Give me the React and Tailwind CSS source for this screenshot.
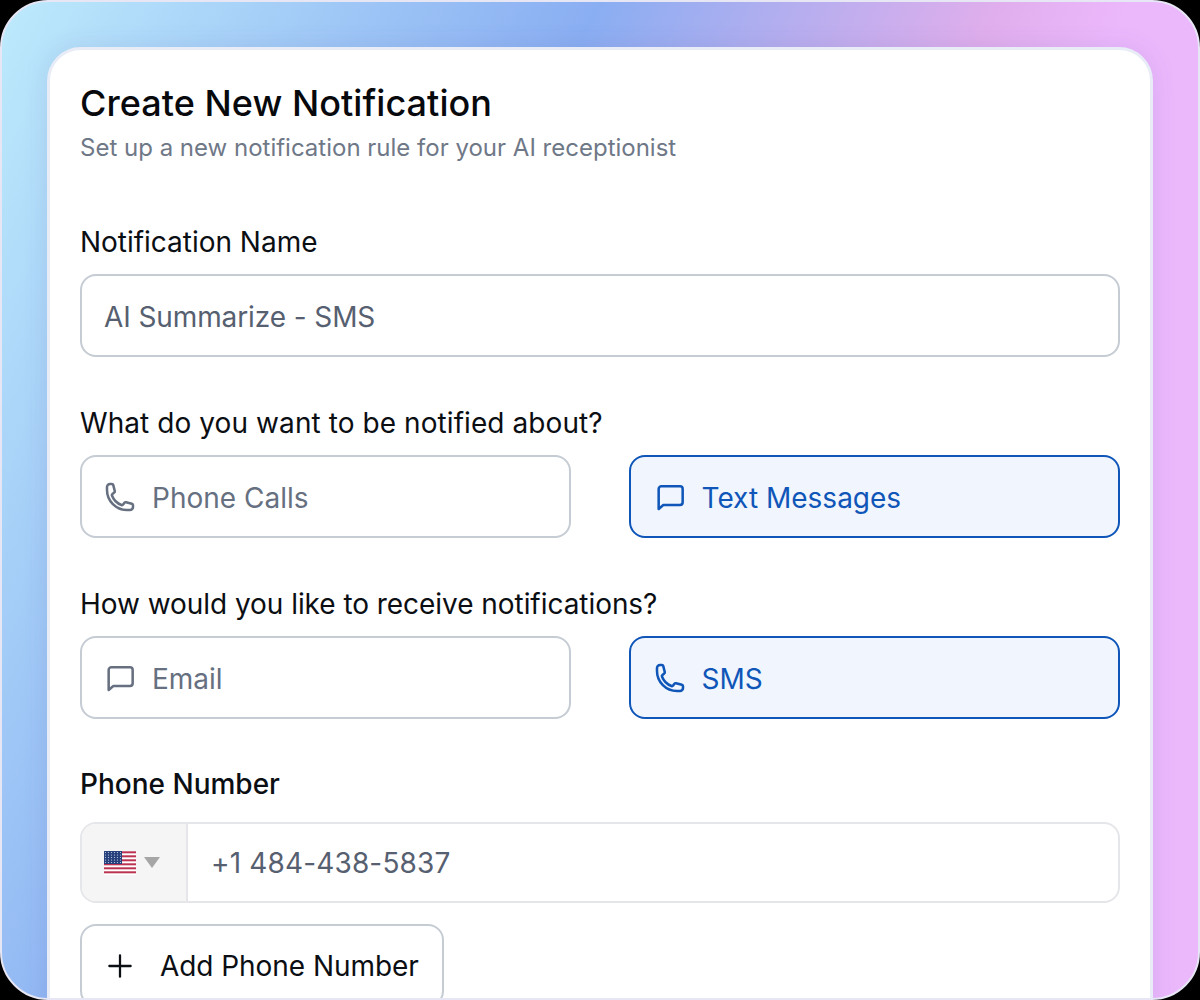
import React from "react";

const PhoneIcon = ({ className }) => (
  <svg className={className} width="32" height="32" viewBox="0 0 24 24" fill="none" stroke="currentColor" strokeWidth="1.9" strokeLinecap="round" strokeLinejoin="round">
    <path d="M2.25 6.75c0 8.284 6.716 15 15 15h2.25a2.25 2.25 0 0 0 2.25-2.25v-1.372c0-.516-.351-.966-.852-1.091l-4.423-1.106c-.44-.11-.902.055-1.173.417l-.97 1.293c-.282.376-.769.542-1.21.38a12.035 12.035 0 0 1-7.143-7.143c-.162-.441.004-.928.38-1.21l1.293-.97c.363-.271.527-.734.417-1.173L6.963 3.102a1.125 1.125 0 0 0-1.091-.852H4.5A2.25 2.25 0 0 0 2.25 4.5v2.25Z" />
  </svg>
);

const ChatIcon = ({ className }) => (
  <svg className={className} width="32" height="32" viewBox="0 0 24 24" fill="none" stroke="currentColor" strokeWidth="1.9" strokeLinecap="round" strokeLinejoin="round">
    <path d="M3.5 21V6a2 2 0 0 1 2-2h14a2 2 0 0 1 2 2v10a2 2 0 0 1-2 2H7L3.5 21Z" />
  </svg>
);

const Flag = () => (
  <svg width="32" height="24" viewBox="0 0 32 24" className="block">
    <rect width="32" height="24" fill="#fff" />
    {[0, 4, 8, 12, 16, 20].map((y) => (
      <rect key={y} x="0" y={y + 0.3} width="32" height="2" fill="#bb3350" />
    ))}
    <rect width="18" height="13" fill="#27417c" />
    {[1.5, 4, 6.5, 9, 11.5].map((y) =>
      [2, 5, 8, 11, 14, 17].map((x) => <circle key={`${x}-${y}`} cx={x - 0.5} cy={y} r="0.6" fill="#c8d2e8" />)
    )}
  </svg>
);

const Option = ({ icon, label, active }) => (
  <div
    className={
      active
        ? "flex h-[83px] flex-1 items-center gap-[16px] rounded-[16px] border-2 border-[#0f56b8] bg-[#f0f5fe] pl-[23px] pr-[22px] text-[#0f56b8]"
        : "flex h-[83px] flex-1 items-center gap-[16px] rounded-[16px] border-2 border-[#c6ccd4] bg-white px-[22px] text-[#667080]"
    }
  >
    {icon}
    <span className="pt-[2px] text-[28px] leading-none">{label}</span>
  </div>
);

export default function App() {
  return (
    <div className="h-[1000px] w-[1200px] overflow-hidden bg-black font-['Inter',sans-serif]">
      <div className="h-[1000px] overflow-hidden rounded-[48px] border-2 border-[#e6e6f4] bg-[linear-gradient(115deg,#bdeafc_0%,#8aaef2_36%,#e0aeec_60%,#ecb8fc_68%,#ecb8fc_100%)] px-[45px] pt-[45px]">
        <div className="h-[1000px] rounded-t-[34px] border-[3px] border-[#e8ecf6] bg-white px-[30px] pt-[28px] shadow-[0_0_24px_rgba(70,70,150,0.12)]">
          <h1 className="text-[36px] font-medium leading-[50px] tracking-[0.05px] text-[#07090d]">Create New Notification</h1>
          <p className="mt-[2px] text-[24px] leading-[36px] text-[#6f7887]">Set up a new notification rule for your AI receptionist</p>

          <label className="mt-[56px] block text-[28px] leading-[40px] tracking-[-0.02px] text-[#0b0e13]">Notification Name</label>
          <div className="mt-[12px] flex h-[83px] items-center rounded-[16px] border-2 border-[#c6ccd4] px-[22px] pt-[2px] text-[28px] tracking-[-0.1px] text-[#566070]">AI Summarize - SMS</div>

          <label className="mt-[46px] block text-[28px] leading-[40px] tracking-[0.08px] text-[#0b0e13]">What do you want to be notified about?</label>
          <div className="mt-[12px] flex gap-[58px]">
            <Option label="Phone Calls" icon={<PhoneIcon />} />
            <Option label="Text Messages" icon={<ChatIcon />} active />
          </div>

          <label className="mt-[46px] block text-[28px] leading-[40px] tracking-[-0.05px] text-[#0b0e13]">How would you like to receive notifications?</label>
          <div className="mt-[12px] flex gap-[58px]">
            <Option label="Email" icon={<ChatIcon />} />
            <Option label="SMS" icon={<PhoneIcon />} active />
          </div>

          <label className="mt-[45px] block text-[28px] font-medium leading-[40px] text-[#0b0e13]">Phone Number</label>
          <div className="mt-[18px] flex h-[81px] overflow-hidden rounded-[16px] border-2 border-[#e4e6ea]">
            <div className="flex w-[106px] items-center gap-[8px] border-r-2 border-[#e4e6ea] bg-[#f5f5f5] pl-[22px]">
              <Flag />
              <span className="h-0 w-0 border-x-[8px] border-t-[11px] border-x-transparent border-t-[#a6a6a6]" />
            </div>
            <div className="flex flex-1 items-center pl-[23px] text-[28px] tracking-[0.15px] text-[#566070]">+1 484-438-5837</div>
          </div>

          <div className="mt-[21px] flex h-[83px] w-[364px] items-center gap-[24px] rounded-[16px] border-2 border-[#c6ccd4] bg-white pl-[22px] text-[28px] tracking-[-0.05px] text-[#0b0e13]">
            <svg width="32" height="32" viewBox="0 0 24 24" fill="none" stroke="currentColor" strokeWidth="1.7" strokeLinecap="round"><path d="M12 4v16M4 12h16" /></svg>
            <span>Add Phone Number</span>
          </div>
        </div>
      </div>
    </div>
  );
}
